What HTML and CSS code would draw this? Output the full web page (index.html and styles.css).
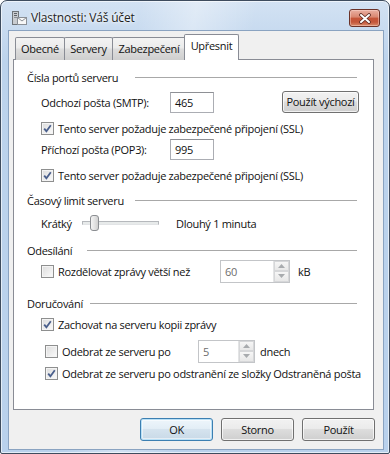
FILE: index.html
```
<!DOCTYPE html>
<html lang="cs">
<head>
    <meta charset="UTF-8">
    <title>Vlastnosti: Váš účet</title>
    <link rel="stylesheet" href="styles.css">
</head>
<body>
    <div class="window">
        <div class="titlebar">
            <svg class="app-icon" width="16" height="16" viewBox="0 0 16 16">
                <rect x="1.5" y="1.5" width="6" height="13" fill="#c9ccd0" stroke="#6f7479"/>
                <rect x="3" y="3" width="3" height="1" fill="#5d6166"/>
                <rect x="3" y="5" width="3" height="1" fill="#5d6166"/>
                <rect x="3" y="7" width="3" height="1" fill="#8b9096"/>
                <rect x="6.5" y="7.5" width="9" height="7" fill="#f7f7f7" stroke="#8a8f96"/>
                <path d="M6.5 7.5 L11 11 L15.5 7.5" fill="none" stroke="#8a8f96"/>
            </svg>
            <span class="title">Vlastnosti: Váš účet</span>
            <div class="close-btn">
                <svg width="14" height="11" viewBox="0 0 14 11">
                    <path d="M3 2 L11 9 M11 2 L3 9" stroke="#5b2a22" stroke-width="3.6" stroke-linecap="round"/>
                    <path d="M3 2 L11 9 M11 2 L3 9" stroke="#ffffff" stroke-width="2" stroke-linecap="round"/>
                </svg>
            </div>
        </div>

        <div class="client">
            <div class="tabs">
                <div class="tab tab-first">Obecné</div>
                <div class="tab tab-servers">Servery</div>
                <div class="tab tab-security">Zabezpečení</div>
                <div class="tab tab-active">Upřesnit</div>
            </div>

            <div class="panel">
                <div class="group-head">
                    <span class="group-label label-wide">Čísla portů serveru</span>
                    <span class="group-line"></span>
                </div>
                <div class="row row-smtp indent">
                    <span class="field-label">Odchozí pošta (SMTP):</span>
                    <div class="textbox">465</div>
                    <div class="btn btn-default-port">Použít výchozí</div>
                </div>
                <div class="row row-ssl1 indent">
                    <span class="checkbox checked"></span>
                    <span>Tento server požaduje zabezpečené připojení (SSL)</span>
                </div>
                <div class="row row-pop indent">
                    <span class="field-label">Příchozí pošta (POP3):</span>
                    <div class="textbox">995</div>
                </div>
                <div class="row row-ssl2 indent">
                    <span class="checkbox checked"></span>
                    <span>Tento server požaduje zabezpečené připojení (SSL)</span>
                </div>

                <div class="group-head head-timeout">
                    <span class="group-label label-wide">Časový limit serveru</span>
                    <span class="group-line"></span>
                </div>
                <div class="row row-slider indent">
                    <span class="slider-label">Krátký</span>
                    <div class="slider">
                        <span class="slider-track"></span>
                        <span class="slider-thumb"></span>
                    </div>
                    <span>Dlouhý 1 minuta</span>
                </div>

                <div class="group-head head-send">
                    <span class="group-label label-send">Odesílání</span>
                    <span class="group-line"></span>
                </div>
                <div class="row row-split indent">
                    <span class="checkbox"></span>
                    <span class="split-label">Rozdělovat zprávy větší než</span>
                    <div class="spin spin-split">
                        <span class="spin-value">60</span>
                        <div class="spin-buttons">
                            <span class="spin-up"><svg width="7" height="4" viewBox="0 0 7 4"><path d="M0 4 L3.5 0 L7 4 Z" fill="#a8abae"/></svg></span>
                            <span class="spin-down"><svg width="7" height="4" viewBox="0 0 7 4"><path d="M0 0 L3.5 4 L7 0 Z" fill="#a8abae"/></svg></span>
                        </div>
                    </div>
                    <span class="unit">kB</span>
                </div>

                <div class="group-head head-deliver">
                    <span class="group-label label-deliver">Doručování</span>
                    <span class="group-line"></span>
                </div>
                <div class="row row-keep indent">
                    <span class="checkbox checked"></span>
                    <span>Zachovat na serveru kopii zprávy</span>
                </div>
                <div class="row row-remove indent-deep">
                    <span class="checkbox"></span>
                    <span class="remove-label">Odebrat ze serveru po</span>
                    <div class="spin spin-days">
                        <span class="spin-value">5</span>
                        <div class="spin-buttons">
                            <span class="spin-up"><svg width="7" height="4" viewBox="0 0 7 4"><path d="M0 4 L3.5 0 L7 4 Z" fill="#a8abae"/></svg></span>
                            <span class="spin-down"><svg width="7" height="4" viewBox="0 0 7 4"><path d="M0 0 L3.5 4 L7 0 Z" fill="#a8abae"/></svg></span>
                        </div>
                    </div>
                    <span class="unit">dnech</span>
                </div>
                <div class="row row-remove2 indent-deep">
                    <span class="checkbox checked"></span>
                    <span>Odebrat ze serveru po odstranění ze složky Odstraněná pošta</span>
                </div>
            </div>

            <div class="dialog-buttons">
                <div class="btn btn-ok">OK</div>
                <div class="btn">Storno</div>
                <div class="btn">Použít</div>
            </div>
        </div>
    </div>
</body>
</html>
```

FILE: styles.css
```
* {
    box-sizing: border-box;
}
body {
    margin: 0;
    background: #ffffff;
    font-family: "Open Sans", "Noto Sans", sans-serif;
    font-size: 11px;
    letter-spacing: -0.3px;
    white-space: nowrap;
    color: #111;
}

/* window frame */
.window {
    width: 390px;
    height: 454px;
    display: flex;
    flex-direction: column;
    padding: 0 5px 3px 7px;
    border: 1px solid #3e4c5e;
    border-radius: 7px 7px 2px 2px;
    background:
        linear-gradient(100deg, rgba(255,255,255,0) 30%, rgba(255,255,255,0.35) 42%, rgba(255,255,255,0) 55%),
        linear-gradient(#d3e2f3, #bcd3ec 60px, #b9d1ec);
    box-shadow: inset 0 0 0 1px rgba(255,255,255,0.6);
}
.titlebar {
    height: 29px;
    display: flex;
    align-items: flex-start;
    padding-left: 3px;
}
.app-icon {
    margin-top: 9px;
}
.title {
    margin-left: 4px;
    margin-top: 9px;
    font-size: 12px;
    line-height: 16px;
    letter-spacing: -0.2px;
    color: #1e1e1e;
    text-shadow: 0 0 6px #fff, 0 0 3px #fff;
}
.close-btn {
    margin-left: auto;
    margin-right: 4px;
    margin-top: 8px;
    width: 31px;
    height: 18px;
    border: 1px solid #6b3228;
    border-radius: 3px;
    background: linear-gradient(#eab0a2, #d98670 45%, #c65539 50%, #c4563a 75%, #d98c6b);
    box-shadow: inset 0 0 0 1px rgba(255,220,210,0.45);
    display: flex;
    align-items: center;
    justify-content: center;
}

/* client area */
.client {
    flex: 1;
    background: #f0f0f0;
    border: 1px solid #8aa3c1;
    padding: 2px 8px 0 4px;
}
.tabs {
    display: flex;
    align-items: flex-end;
    height: 27px;
    padding-left: 2px;
    margin-bottom: -1px;
}
.tab {
    height: 23px;
    border: 1px solid #898c95;
    border-bottom: none;
    margin-right: -1px;
    border-radius: 2px 2px 0 0;
    background: linear-gradient(#f3f3f3, #ebebeb 45%, #dddddd 50%, #cfcfcf);
    text-align: center;
    line-height: 22px;
}
.tab-first { width: 50px; }
.tab-servers { width: 49px; }
.tab-security { width: 74px; }
.tab-active {
    position: relative;
    z-index: 1;
    width: 55px;
    height: 26px;
    margin-left: -1px;
    background: #ffffff;
    line-height: 22px;
}

.panel {
    width: 361px;
    height: 351px;
    background: #ffffff;
    border: 1px solid #898c95;
    padding: 7px 0 0 13px;
}

.group-head {
    display: flex;
    align-items: center;
    height: 20px;
    margin-right: 16px;
}
.group-label { flex-shrink: 0; }
.label-wide { width: 108px; }
.label-send { width: 60px; }
.label-deliver { width: 63px; }
.group-line {
    flex: 1;
    height: 1px;
    background: #a8a8a8;
}
.head-timeout { margin-top: 5px; }
.head-send { margin-top: 7px; }
.head-deliver { margin-top: 12px; }

.row {
    display: flex;
    align-items: center;
    height: 20px;
}
.indent { padding-left: 14px; }
.indent-deep { padding-left: 18px; }
.row-smtp { margin-top: 5px; }
.row-ssl1 { margin-top: 6px; }
.row-pop { margin-top: 1px; }
.row-ssl2 { margin-top: 6px; }
.row-slider { margin-top: 3px; }
.row-split { margin-top: 1px; }
.row-keep { margin-top: 1px; }
.row-remove { margin-top: 7px; }
.row-remove2 { margin-top: 2px; }

.field-label {
    width: 129px;
}
.textbox {
    width: 44px;
    height: 21px;
    border: 1px solid #abadb3;
    border-top-color: #8e9095;
    background: #fff;
    padding-left: 4px;
    line-height: 19px;
}

.checkbox {
    width: 13px;
    height: 13px;
    margin-right: 4px;
    border: 1px solid #8e8f8f;
    background: linear-gradient(135deg, #dcdcdc, #fbfbfb);
    box-shadow: inset 0 0 0 1px #f4f4f4;
    flex-shrink: 0;
}
.checked {
    background:
        url("data:image/svg+xml;utf8,<svg xmlns='http://www.w3.org/2000/svg' width='11' height='11'><path d='M2.2 5.6 L4.4 8.2 L8.8 2.2' fill='none' stroke='%234a5f8c' stroke-width='1.8'/></svg>") center / 11px 11px no-repeat,
        linear-gradient(135deg, #dcdcdc, #fbfbfb);
}

/* buttons */
.btn {
    width: 73px;
    height: 23px;
    border: 1px solid #707070;
    border-radius: 3px;
    background: linear-gradient(#f2f2f2, #ebebeb 45%, #dddddd 50%, #cfcfcf);
    box-shadow: inset 0 0 0 1px rgba(255,255,255,0.7);
    text-align: center;
    line-height: 21px;
}
.btn-default-port {
    width: 77px;
    height: 22px;
    margin-left: 68px;
    line-height: 20px;
}
.btn-ok {
    border-color: #3c7fb1;
    box-shadow: inset 0 0 0 1px #b9e0f6, inset 0 0 0 2px rgba(255,255,255,0.5);
    background: linear-gradient(#eef6fb, #e3eef6 45%, #d5e3ee 50%, #c8d9e7);
}
.dialog-buttons {
    display: flex;
    justify-content: flex-end;
    gap: 8px;
    margin-top: 8px;
}

/* slider */
.slider-label { width: 41px; }
.slider {
    position: relative;
    width: 77px;
    height: 20px;
    margin-right: 17px;
}
.slider-track {
    position: absolute;
    left: 0;
    right: 0;
    top: 8px;
    height: 4px;
    border: 1px solid #b5b8bc;
    border-bottom-color: #e2e4e6;
    background: #e7eaea;
}
.slider-thumb {
    position: absolute;
    left: 8px;
    top: 2px;
    width: 9px;
    height: 16px;
    border: 1px solid #8b8e92;
    border-radius: 3px;
    background: linear-gradient(90deg, #f4f4f4, #e3e3e3 50%, #d0d0d0);
}

/* spin boxes */
.split-label { width: 162px; }
.remove-label { width: 136px; }
.spin {
    display: flex;
    height: 23px;
    border: 1px solid #c3c5c8;
    background: #ffffff;
    color: #6d6d6d;
}
.spin-split { width: 70px; }
.spin-days { width: 57px; }
.spin-value {
    flex: 1;
    padding-left: 4px;
    line-height: 21px;
}
.spin-buttons {
    width: 16px;
    display: flex;
    flex-direction: column;
    border-left: 1px solid #e3e4e5;
}
.spin-up, .spin-down {
    flex: 1;
    display: flex;
    align-items: center;
    justify-content: center;
    background: linear-gradient(#f6f6f6, #e8e8e8);
    border: 1px solid #d6d7d9;
}
.unit {
    margin-left: 8px;
}
.row-remove .unit {
    margin-left: 5px;
}
```
